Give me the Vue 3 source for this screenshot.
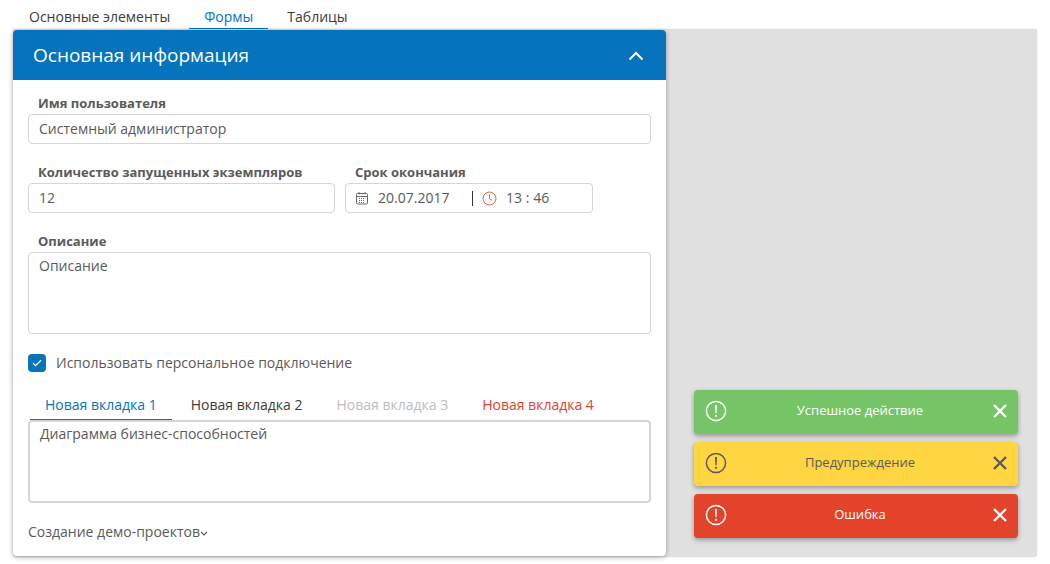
<script setup>
const topTabs = [
  { text: 'Основные элементы' },
  { text: 'Формы', active: true },
  { text: 'Таблицы' },
]

const innerTabs = [
  { text: 'Новая вкладка 1', cls: 'is-active' },
  { text: 'Новая вкладка 2', cls: '' },
  { text: 'Новая вкладка 3', cls: 'is-disabled' },
  { text: 'Новая вкладка 4', cls: 'is-danger' },
]

const toasts = [
  { text: 'Успешное действие', cls: 'toast--success' },
  { text: 'Предупреждение', cls: 'toast--warning' },
  { text: 'Ошибка', cls: 'toast--error' },
]
</script>

<template>
  <div class="page">
    <nav class="top-tabs">
      <span
        v-for="tab in topTabs"
        :key="tab.text"
        class="top-tab"
        :class="{ 'is-active': tab.active }"
      >{{ tab.text }}</span>
    </nav>

    <div class="workspace">
      <section class="card">
        <header class="card__head">
          <h2>Основная информация</h2>
          <svg class="card__toggle" width="16" height="10" viewBox="0 0 16 10">
            <path d="M1.5 8.5 8 2l6.5 6.5" fill="none" stroke="#fff" stroke-width="2" />
          </svg>
        </header>

        <div class="card__body">
          <label class="label">Имя пользователя</label>
          <div class="input">Системный администратор</div>

          <div class="row">
            <div class="col col--count">
              <label class="label">Количество запущенных экземпляров</label>
              <div class="input">12</div>
            </div>
            <div class="col col--date">
              <label class="label">Срок окончания</label>
              <div class="input input--date">
                <svg class="date-icon" width="14" height="14" viewBox="0 0 14 14" fill="none" stroke="#6b6b6b">
                  <rect x="1.5" y="2.5" width="11" height="10.5" rx="1" />
                  <path d="M1.5 5.5h11M4 1v2.5M10 1v2.5" />
                  <path d="M4 7.5h6M4 9.5h6M4 11.5h6" stroke-dasharray="1 1" />
                </svg>
                <span class="date-value">20.07.2017</span>
                <span class="date-sep"></span>
                <svg class="time-icon" width="15" height="15" viewBox="0 0 15 15" fill="none" stroke="#d4694a">
                  <circle cx="7.5" cy="7.5" r="6.5" />
                  <path d="M7.5 3.5v4.2l2.6 1.6" />
                </svg>
                <span class="time-value">13 : 46</span>
              </div>
            </div>
          </div>

          <label class="label label--desc">Описание</label>
          <div class="input input--area">Описание</div>

          <div class="check">
            <span class="check__box">
              <svg width="10" height="8" viewBox="0 0 10 8">
                <path d="M1 4l2.6 2.6L9 1.2" fill="none" stroke="#fff" stroke-width="1.3" />
              </svg>
            </span>
            <span class="check__text">Использовать персональное подключение</span>
          </div>

          <div class="inner-tabs">
            <span
              v-for="tab in innerTabs"
              :key="tab.text"
              class="inner-tab"
              :class="tab.cls"
            >{{ tab.text }}</span>
          </div>
          <div class="tab-panel">Диаграмма бизнес-способностей</div>

          <div class="more">
            <span>Создание демо-проектов</span>
            <svg width="8" height="5" viewBox="0 0 8 5">
              <path d="M1 1l3 3 3-3" fill="none" stroke="#555" stroke-width="1.1" />
            </svg>
          </div>
        </div>
      </section>

      <aside class="toasts">
        <div v-for="toast in toasts" :key="toast.text" class="toast" :class="toast.cls">
          <svg width="22" height="22" viewBox="0 0 22 22" fill="none" stroke="currentColor">
            <circle cx="11" cy="11" r="9.6" stroke-width="1.5" />
            <path d="M10 5h2l-.4 8.2h-1.2z" fill="currentColor" stroke="none" />
            <circle cx="11" cy="15.8" r="1.1" fill="currentColor" stroke="none" />
          </svg>
          <span class="toast__text">{{ toast.text }}</span>
          <svg width="14" height="14" viewBox="0 0 14 14" fill="none" stroke="currentColor" stroke-width="2.3">
            <path d="M1 1l12 12M13 1 1 13" />
          </svg>
        </div>
      </aside>
    </div>
  </div>
</template>

<style>
html,
body {
  margin: 0;
  background: #fff;
}
</style>

<style scoped>
.page {
  width: 1050px;
  height: 564px;
  overflow: hidden;
  font-family: "Open Sans", "Liberation Sans", sans-serif;
  font-size: 14px;
  color: #5a5a5a;
  box-sizing: border-box;
  padding: 0 13px;
}

.top-tabs {
  display: flex;
  height: 29px;
  padding-left: 1px;
}
.top-tab {
  padding: 7px 15px 0;
  color: #3c3c3c;
  line-height: 19px;
  margin-right: 4px;
}
.top-tab.is-active {
  color: #0674bd;
  box-shadow: inset 0 -1px 0 #0674bd;
}

.workspace {
  display: flex;
  width: 1024px;
  height: 528px;
  box-sizing: border-box;
  background: #e1e1e1;
  border-radius: 0 0 4px 4px;
  box-shadow: 0 0 1px #bbb;
}

.card {
  width: 653px;
  height: 526px;
  margin-top: 1px;
  background: #fff;
  border-radius: 4px;
  box-shadow: 0 1px 5px rgba(0, 0, 0, 0.35);
  display: flex;
  flex-direction: column;
}
.card__head {
  height: 50px;
  flex: none;
  background: #0674bd;
  border-radius: 4px 4px 0 0;
  color: #fff;
  display: flex;
  align-items: center;
  justify-content: space-between;
  padding: 0 22px 0 20px;
}
.card__head h2 {
  margin: 0;
  font-size: 19px;
  font-weight: 400;
}
.card__toggle {
  margin-top: 2px;
}

.card__body {
  padding: 14px 15px 0;
}

.label {
  display: block;
  padding-left: 10px;
  font-size: 13px;
  font-weight: 700;
  line-height: 18px;
  margin-bottom: 2px;
}

.input {
  height: 30px;
  box-sizing: border-box;
  border: 1px solid #d6d6d6;
  border-radius: 4px;
  padding: 0 10px;
  line-height: 28px;
  background: #fff;
}
.input--area {
  height: 82px;
  line-height: 26px;
}
.input--date {
  display: flex;
  align-items: center;
  padding-left: 9px;
}

.row {
  display: flex;
  gap: 10px;
  margin-top: 19px;
}
.col--count {
  width: 307px;
}
.col--date {
  width: 248px;
}

.date-value {
  margin-left: 9px;
  width: 94px;
}
.date-sep {
  width: 1px;
  height: 15px;
  background: #333;
}
.time-icon {
  margin: 0 9px;
}
.time-value {
  letter-spacing: 0.05px;
}

.label--desc {
  margin-top: 19px;
}

.check {
  display: flex;
  align-items: center;
  gap: 10px;
  margin-top: 20px;
  height: 18px;
}
.check__box {
  width: 18px;
  height: 18px;
  border-radius: 4px;
  background: #0674bd;
  display: flex;
  align-items: center;
  justify-content: center;
}
.check__text {
  padding-bottom: 2px;
}

.inner-tabs {
  display: flex;
  height: 38px;
  margin-top: 10px;
  padding-left: 2px;
}
.inner-tab {
  padding: 13px 15px 0;
  line-height: 19px;
  margin-right: 4px;
  box-sizing: border-box;
  color: #3c3c3c;
}
.inner-tab.is-active {
  color: #0674bd;
  box-shadow: inset 0 -1px 0 #0674bd;
}
.inner-tab.is-disabled {
  color: #bdbdbd;
}
.inner-tab.is-danger {
  color: #e2432a;
}

.tab-panel {
  height: 83px;
  box-sizing: border-box;
  border: 2px solid #d6d6d6;
  border-radius: 4px;
  padding: 0 10px;
  line-height: 24px;
}

.more {
  display: flex;
  align-items: center;
  margin-top: 19px;
  line-height: 19px;
}
.more svg {
  margin-top: 3px;
}

.toasts {
  flex: 1;
  display: flex;
  flex-direction: column;
  justify-content: flex-end;
  gap: 8px;
  padding: 0 19px 19px 28px;
}
.toast {
  height: 44px;
  flex: none;
  display: flex;
  align-items: center;
  padding: 0 11px 2px;
  box-sizing: border-box;
  border-radius: 4px;
  font-size: 13px;
  box-shadow: 0 2px 5px rgba(0, 0, 0, 0.35);
}
.toast__text {
  flex: 1;
  text-align: center;
  padding-bottom: 2px;
}
.toast--success {
  background: #75c566;
  color: #fff;
}
.toast--warning {
  background: #ffd641;
  color: #5a5a5a;
}
.toast--error {
  background: #e2432a;
  color: #fff;
}
</style>
